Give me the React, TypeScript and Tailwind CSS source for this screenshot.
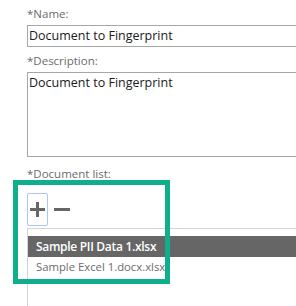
import React from "react";

export default function App() {
  return (
    <div
      className="relative w-[296px] h-[306px] overflow-hidden bg-white pl-[27px]"
      style={{ fontFamily: '"Open Sans", "Noto Sans", sans-serif' }}
    >
      <div className="pt-[6px] text-[11.5px] leading-[16px] text-[#6b6b6b]">*Name:</div>
      <div className="mt-[3px] h-[22px] w-[300px] border border-[#a6a6a6] pl-[1px] text-[12.5px] leading-[20px] text-[#1a1a1a]">
        Document to Fingerprint
      </div>
      <div className="mt-[6px] text-[11.5px] leading-[16px] text-[#6b6b6b]">*Description:</div>
      <div className="mt-[3px] h-[85px] w-[300px] border border-[#a6a6a6] pl-[1px] pt-[1px] text-[12.5px] leading-[18px] text-[#1a1a1a]">
        Document to Fingerprint
      </div>
      <div className="mt-[9px] text-[11.5px] leading-[16px] text-[#6b6b6b]">*Document list:</div>
      <div className="mt-[11px] flex items-start gap-[6px]">
        <div className="flex h-[33px] w-[21px] items-center justify-center rounded-[2px] border border-[#a9c7ff]">
          <svg width="15" height="15" viewBox="0 0 15 15">
            <rect x="0" y="6" width="15" height="3" fill="#666666" />
            <rect x="6" y="0" width="3" height="15" fill="#666666" />
          </svg>
        </div>
        <div className="flex h-[33px] items-center">
          <svg width="16" height="15" viewBox="0 0 16 15">
            <rect x="0" y="6" width="16" height="3" fill="#666666" />
          </svg>
        </div>
      </div>
      <div className="mt-[2px] h-[100px] border-l border-t border-[#d2d5d8] pt-[7px]">
        <div className="h-[21px] bg-[#666666] pl-[8px] text-[12px] font-semibold leading-[21px] tracking-[-0.3px] text-white">
          Sample PII Data 1.xlsx
        </div>
        <div className="h-[20px] pl-[8px] text-[11.3px] leading-[20px] text-[#6b6b6b]">
          Sample Excel 1.docx.xlsx
        </div>
      </div>
      <div className="absolute left-[13px] top-[180px] h-[104px] w-[157px] border-[5px] border-[#0fae8c]" />
    </div>
  );
}
